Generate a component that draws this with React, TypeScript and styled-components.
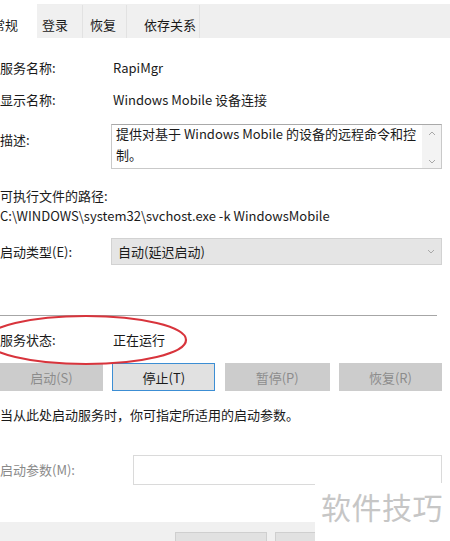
import React from "react";
import styled, { createGlobalStyle } from "styled-components";

const Global = createGlobalStyle`
  html, body { margin: 0; padding: 0; background: #ffffff; }
  body {
    font-family: "Noto Sans CJK SC", "Noto Sans", "Liberation Sans", sans-serif;
    font-size: 13px;
    color: #1a1a1a;
  }
`;

const Page = styled.div`
  position: relative;
  width: 450px;
  height: 541px;
  overflow: hidden;
  background: #ffffff;
  display: flex;
  flex-direction: column;
  & > * { flex-shrink: 0; }
`;

const TabStrip = styled.div`
  margin-top: 4px;
  height: 34px;
  background: #efefef;
  display: flex;
  align-items: stretch;
`;

const Tab = styled.div<{ $w: number; $pl: number; $active?: boolean }>`
  box-sizing: border-box;
  width: ${(p) => p.$w}px;
  padding-left: ${(p) => p.$pl}px;
  padding-bottom: 3px;
  display: flex;
  align-items: flex-end;
  line-height: 20px;
  background: ${(p) => (p.$active ? "#ffffff" : "#f0f0f0")};
  border-right: 1px solid ${(p) => (p.$active ? "#ffffff" : "#e2e2e2")};
  margin-top: ${(p) => (p.$active ? "-4px" : "1px")};
  color: #1a1a1a;
  &:first-child { margin-left: -12px; }
`;

const Content = styled.div`
  display: flex;
  flex-direction: column;
  padding-top: 14px;
  width: 442px;
`;

const Row = styled.div<{ $h: number; $mt?: number; $top?: boolean }>`
  display: flex;
  align-items: ${(p) => (p.$top ? "flex-start" : "center")};
  height: ${(p) => p.$h}px;
  margin-top: ${(p) => p.$mt ?? 0}px;
  line-height: 20px;
  flex-shrink: 0;
`;

const Label = styled.div<{ $w?: number; $pt?: number; $muted?: boolean }>`
  width: ${(p) => p.$w ?? 111}px;
  flex: none;
  padding-top: ${(p) => p.$pt ?? 0}px;
  color: ${(p) => (p.$muted ? "#8a8a8a" : "#1a1a1a")};
  white-space: nowrap;
`;

const Value = styled.div`
  padding-left: 2px;
  white-space: nowrap;
`;

const Line = styled.div<{ $mt?: number }>`
  margin-top: ${(p) => p.$mt ?? 0}px;
  line-height: 20px;
  white-space: nowrap;
  flex-shrink: 0;
`;

const TextArea = styled.div`
  flex: 1;
  height: 45px;
  box-sizing: border-box;
  border: 1px solid #c9c9c9;
  border-top-color: #a9a9a9;
  display: flex;
  background: #ffffff;
`;

const AreaText = styled.div`
  flex: 1;
  padding: 0 4px;
  line-height: 21px;
  margin-top: -2px;
`;

const ScrollBar = styled.div`
  width: 19px;
  background: #f3f3f3;
  display: flex;
  flex-direction: column;
  align-items: center;
  justify-content: space-between;
  padding: 6px 0 4px;
`;

const Select = styled.div`
  flex: 1;
  height: 27px;
  box-sizing: border-box;
  background: #e5e5e5;
  border: 1px solid #d2d2d2;
  display: flex;
  align-items: center;
  justify-content: space-between;
  padding: 0 6px 0 6px;
`;

const Separator = styled.div<{ $mt: number }>`
  margin-top: ${(p) => p.$mt}px;
  height: 1px;
  width: 437px;
  background: #a6a6a6;
  flex-shrink: 0;
`;

const StatusRow = styled(Row)`
  position: relative;
`;

const Ellipse = styled.svg`
  position: absolute;
  left: -20px;
  top: -19px;
  pointer-events: none;
`;

const Buttons = styled.div`
  display: flex;
  justify-content: space-between;
  margin-top: 13px;
  height: 28px;
  flex-shrink: 0;
`;

const Button = styled.div<{ $disabled?: boolean; $focus?: boolean; $w?: number }>`
  box-sizing: border-box;
  width: ${(p) => p.$w ?? 103}px;
  height: 28px;
  display: flex;
  align-items: center;
  justify-content: center;
  background: ${(p) => (p.$disabled ? "#cccccc" : "#e1e1e1")};
  color: ${(p) => (p.$disabled ? "#8c8c8c" : "#1a1a1a")};
  border: 1px solid ${(p) => (p.$focus ? "#3c8ed4" : p.$disabled ? "#cccccc" : "#adadad")};
`;

const Input = styled.div`
  flex: 1;
  height: 30px;
  box-sizing: border-box;
  border: 1px solid #dadada;
  background: #ffffff;
`;

const BottomBar = styled.div`
  margin-top: 37px;
  height: 40px;
  background: #f0f0f0;
  display: flex;
  padding: 10px 0 0 175px;
  gap: 8px;
`;

const BottomButton = styled.div`
  width: 92px;
  height: 24px;
  box-sizing: border-box;
  background: #e1e1e1;
  border: 1px solid #cfcfcf;
`;

const Watermark = styled.div`
  position: absolute;
  right: 0;
  bottom: 0;
  width: 135px;
  height: 58px;
  background: #ffffff;
  box-sizing: border-box;
  padding-left: 6px;
  padding-top: 3px;
  font-size: 30px;
  line-height: 40px;
  letter-spacing: 0.5px;
  color: #c6c6c6;
  white-space: nowrap;
`;

const Chevron = ({ up }: { up?: boolean }) => (
  <svg width="8" height="5" viewBox="0 0 8 5">
    <path
      d={up ? "M1 4 L4 1 L7 4" : "M1 1 L4 4 L7 1"}
      fill="none"
      stroke="#a8a8a8"
      strokeWidth="1"
    />
  </svg>
);

export default function App() {
  return (
    <>
      <Global />
      <Page>
        <TabStrip>
          <Tab $w={49} $pl={4} $active>常规</Tab>
          <Tab $w={46} $pl={5}>登录</Tab>
          <Tab $w={44} $pl={7}>恢复</Tab>
          <Tab $w={73} $pl={17}>依存关系</Tab>
        </TabStrip>
        <Content>
          <Row $h={32}>
            <Label>服务名称:</Label>
            <Value>RapiMgr</Value>
          </Row>
          <Row $h={32}>
            <Label>显示名称:</Label>
            <Value>Windows Mobile 设备连接</Value>
          </Row>
          <Row $h={45} $mt={8} $top>
            <Label $pt={6}>描述:</Label>
            <TextArea>
              <AreaText>提供对基于 Windows Mobile 的设备的远程命令和控制。</AreaText>
              <ScrollBar>
                <Chevron up />
                <Chevron />
              </ScrollBar>
            </TextArea>
          </Row>
          <Line $mt={17}>可执行文件的路径:</Line>
          <Line>C:\WINDOWS\system32\svchost.exe -k WindowsMobile</Line>
          <Row $h={27} $mt={12}>
            <Label>启动类型(E):</Label>
            <Select>
              <span>自动(延迟启动)</span>
              <Chevron />
            </Select>
          </Row>
          <Separator $mt={50} />
          <StatusRow $h={20} $mt={14}>
            <Label>服务状态:</Label>
            <Value>正在运行</Value>
            <Ellipse width="214" height="58" viewBox="0 0 214 58">
              <ellipse cx="106" cy="29" rx="100" ry="24" fill="none" stroke="#d8343c" strokeWidth="2.2" />
            </Ellipse>
          </StatusRow>
          <Buttons>
            <Button $disabled>启动(S)</Button>
            <Button $focus>停止(T)</Button>
            <Button $disabled $w={105}>暂停(P)</Button>
            <Button $disabled>恢复(R)</Button>
          </Buttons>
          <Line $mt={14}>当从此处启动服务时，你可指定所适用的启动参数。</Line>
          <Row $h={30} $mt={30}>
            <Label $w={133} $muted>启动参数(M):</Label>
            <Input />
          </Row>
        </Content>
        <BottomBar>
          <BottomButton />
          <BottomButton />
        </BottomBar>
        <Watermark>软件技巧</Watermark>
      </Page>
    </>
  );
}
